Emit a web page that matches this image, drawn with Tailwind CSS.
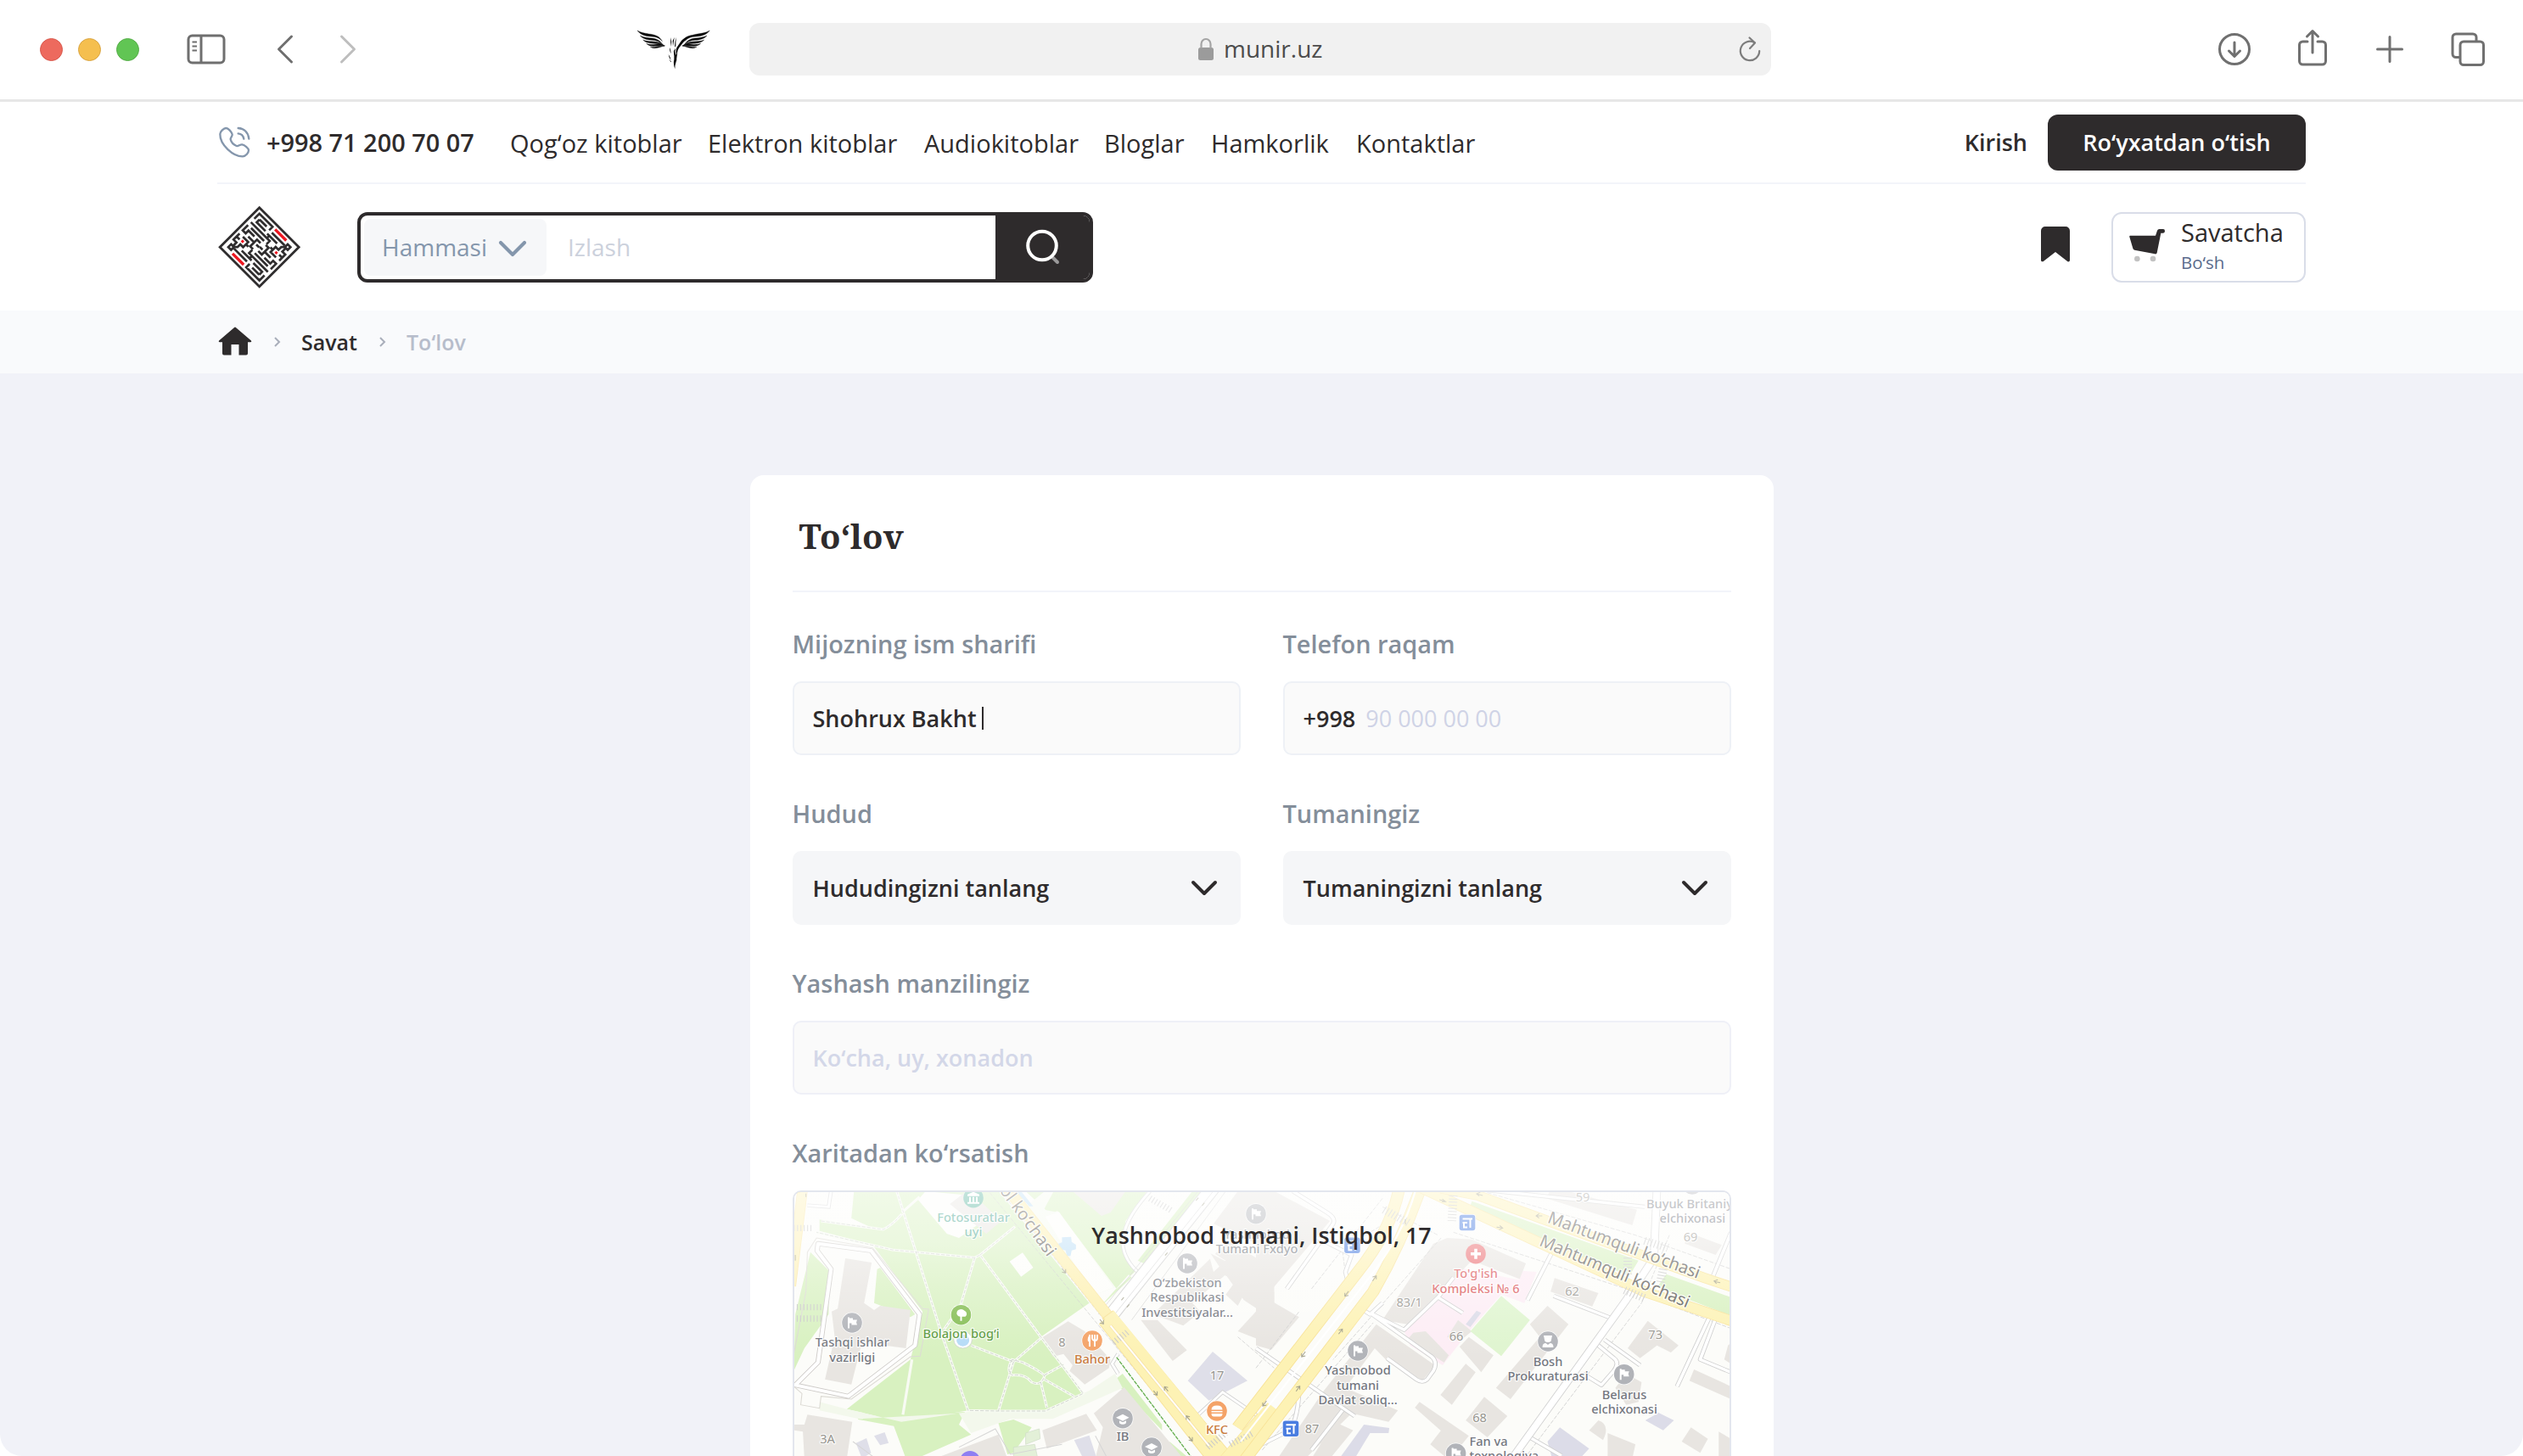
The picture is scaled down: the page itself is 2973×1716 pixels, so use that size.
<!DOCTYPE html>
<html lang="uz">
<head>
<meta charset="utf-8">
<title>To‘lov</title>
<script src="https://cdn.jsdelivr.net/npm/@tailwindcss/browser@4"></script>
</head>
<body class="bg-white font-['Open_Sans',sans-serif] text-[#2e2b2c]">
<div class="flex h-[1716px] w-[2973px] flex-col overflow-hidden rounded-b-[26px] bg-white">

  <!-- Browser toolbar -->
  <header class="flex h-[120px] shrink-0 items-start border-b-[3px] border-[#e7e7e7] pt-[27px]">
    <div class="flex h-[62px] items-center">
      <div class="ml-[47px] flex gap-[18px]">
        <i class="size-[27px] rounded-full border border-[#d8584c] bg-[#ed6a5e]"></i>
        <i class="size-[27px] rounded-full border border-[#d9a441] bg-[#f5bf4f]"></i>
        <i class="size-[27px] rounded-full border border-[#55ad47] bg-[#61c554]"></i>
      </div>
      <svg class="ml-[56px] h-[36px] w-[46px]" viewBox="0 0 46 36" fill="none" stroke="#6f6f6f" stroke-width="3"><rect x="2" y="2" width="42" height="32" rx="4.5"/><path d="M17 2v32"/><path d="M6.500 9.500h5.500M6.500 14.500h5.500M6.500 19.500h5.500" stroke-width="2"/></svg>
      <svg class="ml-[59px] h-[36px] w-[22px]" viewBox="0 0 22 36" fill="none" stroke="#6f6f6f" stroke-width="3" stroke-linecap="round" stroke-linejoin="round"><path d="M18.500 3L3.500 18l15 15"/></svg>
      <svg class="ml-[52px] h-[36px] w-[22px]" viewBox="0 0 22 36" fill="none" stroke="#bebebe" stroke-width="3" stroke-linecap="round" stroke-linejoin="round"><path d="M3.500 3l15 15-15 15"/></svg>
      <svg class="ml-[324px] h-[60px] w-[100px]" viewBox="0 0 300 180" fill="#0a0a0a">
        <g id="wing" stroke="#0a0a0a" stroke-width="1">
          <path d="M18 24C30 40 48 44 66 45 86 46 98 52 106 62 98 46 84 40 66 37 48 34 32 32 18 24Z"/>
          <path d="M28 42C38 54 52 57 70 58 86 59 98 64 108 74 98 60 88 53 70 51 54 50 40 48 28 42Z"/>
          <path d="M38 57C48 67 60 69 76 70 92 70 104 73 114 80 104 69 92 64 76 63 60 62 48 62 38 57Z"/>
          <path d="M50 70C58 78 70 80 82 79 94 77 106 76 116 78 106 71 94 71 82 73 70 74 60 74 50 70Z"/>
          <path d="M64 82C74 88 84 87 94 84L112 79C100 78 92 79 84 81 76 83 70 83 64 82Z"/>
        </g>
        <use href="#wing" transform="matrix(-1 0 0 1 292 0)"/>
        <path d="M212 40C190 44 178 54 168 68L157 85C153 96 154 104 158 114 157 100 162 88 171 78 182 62 196 50 212 40Z"/>
        <path d="M136 48q5 16 2 34-4-16-2-34zM149 48l-5 32-1-20zM156 47q-3 18-2 31l-4 5q0-22 6-36zM134 84q-4 10 3 22-1-12-3-22zM153 86q-4 12 1 22 6 14 1 26-5 14-4 26-7-18-3-34 1-12-1-22-2-10 6-18zM128 108q1 12 9 20-3-12-9-20zM130 124l8 10-2 2zM160 94q-1 16-3 28l-3-8z"/>
      </svg>
      <div class="ml-[38px] flex h-[62px] w-[1204px] items-center rounded-[12px] bg-[#f1f1f1]">
        <svg class="ml-[528px] h-[28px] w-[20px]" viewBox="0 0 20 28"><rect x="1" y="12" width="18" height="15" rx="2.500" fill="#9b9b9b"/><path d="M4.500 13V8a5.500 6 0 0 1 11 0v5" fill="none" stroke="#a4a4a4" stroke-width="2.200"/></svg>
        <span class="mb-[3px] ml-[11px] text-[28px] leading-none text-[#4c4c4c]">munir.uz</span>
        <svg class="mr-[10px] ml-auto h-[32px] w-[30px]" viewBox="0 0 30 32" fill="none" stroke="#7d7d7d" stroke-width="2.200" stroke-linecap="round" stroke-linejoin="round"><path d="M20.500 8.200A11.200 11.200 0 1 0 26.200 18"/><path d="M14.500 2.500l6.500 6-6 6.500"/></svg>
      </div>
      <svg class="ml-[526px] size-[40px]" viewBox="0 0 40 40" fill="none" stroke="#707070" stroke-width="3" stroke-linecap="round" stroke-linejoin="round"><circle cx="20" cy="20" r="17.500"/><path d="M20 12v16M13.500 22l6.500 6.500 6.500-6.500"/></svg>
      <svg class="mb-[3px] ml-[52px] h-[46px] w-[40px]" viewBox="0 0 40 46" fill="none" stroke="#707070" stroke-width="3" stroke-linecap="round" stroke-linejoin="round"><path d="M14 15H8.500a4 4 0 0 0-4 4v19a4 4 0 0 0 4 4h23a4 4 0 0 0 4-4V19a4 4 0 0 0-4-4H26M20 28V3M13.500 9L20 2.500 26.500 9"/></svg>
      <svg class="ml-[51px] size-[40px]" viewBox="0 0 40 40" fill="none" stroke="#707070" stroke-width="3" stroke-linecap="round"><path d="M20 5.500v29M5.500 20h29"/></svg>
      <svg class="ml-[51px] size-[42px]" viewBox="0 0 42 42" fill="none" stroke="#707070" stroke-width="3" stroke-linejoin="round"><rect x="12" y="12" width="27.500" height="27.500" rx="4"/><path d="M11 30.500H7a4 4 0 0 1-4-4V7a4 4 0 0 1 4-4h20a4 4 0 0 1 4 4v4"/></svg>
    </div>
  </header>

  <!-- Site header -->
  <div class="mx-[256px] flex h-[97px] w-[2461px] shrink-0 items-center border-b-2 border-[#f3f4fa]">
    <svg class="size-[40px]" viewBox="17 24 120 120" fill="none" stroke="#8496ac" stroke-width="7" stroke-linecap="round" stroke-linejoin="round"><path d="M48 33C40 33 27 45 27 54C26 92 74 134 107 133C118 132 128 120 128 111C128 104 114 93 105 91C97 90 92 98 85 96C75 92 66 82 64 73C63 66 71 62 70 55C68 47 56 33 48 33Z"/><path d="M91 33C113 34 127 49 129 71M91 52C102 53 109 60 111 71"/></svg>
    <span class="mt-[2px] ml-[18px] w-[287px] text-[28.900px] leading-none font-semibold">+998 71 200 70 07</span>
    <nav class="mt-[2px] grid grid-cols-[233px_255px_212px_126px_171px_auto] text-[29px] leading-none whitespace-nowrap">
      <a>Qog‘oz kitoblar</a><a>Elektron kitoblar</a><a>Audiokitoblar</a><a>Bloglar</a><a>Hamkorlik</a><a>Kontaktlar</a>
    </nav>
    <a class="ml-auto text-[27px] leading-none font-semibold">Kirish</a>
    <a class="ml-[24px] flex h-[66px] w-[304px] items-center justify-center rounded-[12px] bg-[#2e2b2c] text-[27px] leading-none font-semibold text-white">Ro‘yxatdan o‘tish</a>
  </div>

  <div class="mx-[256px] flex h-[149px] w-[2461px] shrink-0 items-center">
    <svg class="-mt-px size-[100px]" viewBox="48 64 300 300">
      <path d="M197 75L336.500 214.500 197 354 57.500 214.500Z" fill="none" stroke="#2f2d2e" stroke-width="8.500"/>
      <g transform="matrix(5 5 -5 5 197 74.500)">
        <path id="maze" fill="none" stroke="#2f2d2e" stroke-width="1.150" d="M2.200 5.800V2.200H11.500V4.600M4.300 4.200H9.300M4.300 4.200V6.200H10.500M2.200 8.200H15.500V10.500M2.200 10.200V14H4.300V12H8.500M4.300 10.200H13.500M6.300 14.200H10.500V12.200H13M2.200 16.200V20.500H4.300V23M2.200 18.300H4.300M4.500 16.200H8.300V19.800H6.300V22M10.500 14.200V17H12.500M13.300 4.500H22.500M12 6.500H19M13.500 6.500V8.200M3 23H5V25H3ZM5 23L6.500 21.500M8.300 17.800H10M12 14.200H14"/>
        <use href="#maze" transform="rotate(180 14 14)"/>
        <path d="M13.300 2.200H21.200M6.800 25.800H14.700" stroke="#ee1620" stroke-width="1.400"/>
        <path d="M5.400 17.300h1.300v1.300h-1.300zM21.300 9.400h1.300v1.300h-1.300z" fill="#ee1620"/>
      </g>
    </svg>
    <div class="ml-[65px] flex h-[83px] w-[867px] items-stretch overflow-hidden rounded-[12px] border-4 border-[#2e2b2c]">
      <div class="my-[4px] ml-[4px] flex w-[215px] items-center rounded-[8px] bg-[#f6f7f9] pl-[21px] leading-none text-[#8496ac]">
        <span class="mb-px w-[135px] text-[28px] font-medium">Hammasi</span>
        <svg class="mt-[2px] h-[22px] w-[38px]" viewBox="0 0 38 22" fill="none" stroke="#8496ac" stroke-width="4.200" stroke-linecap="round" stroke-linejoin="round"><path d="M5 4l14 14L33 4"/></svg>
      </div>
      <div class="flex flex-1 items-center pb-px pl-[25px] text-[28px] leading-none text-[#ccd1dc]">Izlash</div>
      <div class="flex w-[111px] items-center bg-[#2e2b2c] pl-[32px]">
        <svg class="size-[48px]" viewBox="0 0 48 48" fill="none" stroke-linecap="round"><path d="M36 36l5 5" stroke="#9a999a" stroke-width="4"/><circle cx="23" cy="21.500" r="16.800" stroke="#fff" stroke-width="4"/></svg>
      </div>
    </div>
    <svg class="mb-[7px] ml-auto h-[42px] w-[34px]" viewBox="0 0 34 42" fill="#2e2b2c"><path d="M5 0h24a5 5 0 0 1 5 5v34.500c0 2-2 2.600-3.500 1L17 30 3.500 40.500C2 42 0 41.500 0 39.500V5a5 5 0 0 1 5-5z"/></svg>
    <div class="ml-[49px] flex h-[83px] w-[229px] rounded-[12px] border-2 border-[#d9dde8]">
      <svg class="mt-[18px] ml-[17px] h-[44px] w-[46px]" viewBox="0 0 138 132"><path d="M9 23h90l6-18q2-5 7-5h14q6 0 6 7t-6 7h-8l-14 70q-1 5-7 4L25 74q-5-1-6-6L7 28q-1-5 2-5z" fill="#2e2b2c"/><circle cx="34" cy="105" r="10" fill="#c2c2c2"/><circle cx="90" cy="105" r="10" fill="#c2c2c2"/></svg>
      <div class="ml-[17px] flex flex-col">
        <span class="mt-[6px] text-[29px] leading-[32px]">Savatcha</span>
        <span class="mt-[6px] text-[20.500px] leading-[26px] text-[#5a6b8c]">Bo‘sh</span>
      </div>
    </div>
  </div>

  <!-- Breadcrumbs -->
  <div class="flex h-[74px] shrink-0 items-center bg-[#f9fafc] pl-[257px] text-[25px] leading-none">
    <svg class="mb-[3px] h-[34px] w-[40px]" viewBox="0 0 40 34" fill="#2e2b2c"><path d="M18.800 1.200q1.200-1.200 2.400 0L39 16.500q1 1.500-.8 1.700H35V31.500q0 2-2 2h-8.500V21h-9v12.500H7q-2 0-2-2V18.200H1.800Q0 18 1 16.500z"/></svg>
    <svg class="ml-[24px] h-[14px] w-[12px]" viewBox="0 0 12 14" fill="none" stroke="#a9aeba" stroke-width="2"><path d="M3 2l5 5-5 5"/></svg>
    <span class="ml-[22px] w-[66px] font-semibold">Savat</span>
    <svg class="ml-[24px] h-[14px] w-[12px]" viewBox="0 0 12 14" fill="none" stroke="#a9aeba" stroke-width="2"><path d="M3 2l5 5-5 5"/></svg>
    <span class="ml-[22px] font-semibold text-[#b7bdcb]">To‘lov</span>
  </div>

  <!-- Checkout -->
  <main class="flex flex-1 justify-center bg-[#f1f2f8] pt-[120px]">
    <section class="h-[1300px] w-[1206px] shrink-0 rounded-t-[16px] bg-white px-[50px]">
      <h1 class="flex h-[138px] items-center border-b-2 border-[#f2f4fa] pt-[7px] pl-[8px] font-['Noto_Serif',serif] text-[40px] leading-none font-bold">To‘lov</h1>
      <div class="mt-[41px] grid grid-cols-2 gap-x-[50px] gap-y-[49px] text-[27px] leading-none font-semibold">
        <div>
          <div class="mb-[24px] flex h-[40px] items-center text-[28.900px] text-[#848e9a]">Mijozning ism sharifi</div>
          <div class="flex h-[87px] items-center rounded-[10px] border-2 border-[#eef1f6] bg-[#fafafa] pl-[22px]">Shohrux Bakht<span class="ml-[6px] h-[27px] w-[2px] bg-[#2e2b2c]"></span></div>
        </div>
        <div>
          <div class="mb-[24px] flex h-[40px] items-center text-[28.900px] text-[#848e9a]">Telefon raqam</div>
          <div class="flex h-[87px] items-center rounded-[10px] border-2 border-[#eef1f6] bg-[#fafafa] pl-[22px]">+998<span class="ml-[12px] font-normal text-[#cfd3e6]">90 000 00 00</span></div>
        </div>
        <div>
          <div class="mb-[24px] flex h-[40px] items-center text-[28.900px] text-[#848e9a]">Hudud</div>
          <div class="flex h-[87px] items-center justify-between rounded-[10px] bg-[#f5f6f8] pr-[26px] pl-[24px]">Hududingizni tanlang<svg class="h-[22px] w-[34px]" viewBox="0 0 34 22" fill="none" stroke="#2e2b2c" stroke-width="4" stroke-linecap="round" stroke-linejoin="round"><path d="M4 4l13 13L30 4"/></svg></div>
        </div>
        <div>
          <div class="mb-[24px] flex h-[40px] items-center text-[28.900px] text-[#848e9a]">Tumaningiz</div>
          <div class="flex h-[87px] items-center justify-between rounded-[10px] bg-[#f5f6f8] pr-[26px] pl-[24px]">Tumaningizni tanlang<svg class="h-[22px] w-[34px]" viewBox="0 0 34 22" fill="none" stroke="#2e2b2c" stroke-width="4" stroke-linecap="round" stroke-linejoin="round"><path d="M4 4l13 13L30 4"/></svg></div>
        </div>
        <div class="col-span-2">
          <div class="mb-[24px] flex h-[40px] items-center text-[28.900px] text-[#848e9a]">Yashash manzilingiz</div>
          <div class="flex h-[87px] items-center rounded-[10px] border-2 border-[#eff0f7] bg-[#fafafa] pl-[22px] text-[#d3d7e8]">Ko‘cha, uy, xonadon</div>
        </div>
        <div class="col-span-2">
          <div class="mb-[24px] flex h-[40px] items-center text-[28.900px] text-[#848e9a]">Xaritadan ko‘rsatish</div>
          <div class="relative h-[420px] overflow-hidden rounded-[10px] border-2 border-[#e3e6ee]">
            <svg class="block h-[416px] w-[1102px]" viewBox="936 1406 1102 416">
              <defs>
                <linearGradient id="fade" x1="0" y1="0" x2="0" y2="1"><stop offset="0" stop-color="#fff" stop-opacity=".64"/><stop offset=".3" stop-color="#fff" stop-opacity=".5"/><stop offset=".55" stop-color="#fff" stop-opacity=".28"/><stop offset=".85" stop-color="#fff" stop-opacity=".06"/><stop offset="1" stop-color="#fff" stop-opacity="0"/></linearGradient>
                <g id="flag"><circle r="12.500" fill="#fff"/><circle r="11.800" fill="#b1b3b8"/><path d="M-5-6.500h2v1h4v2h5l-1 3 1 3H-.500v-2H-3v6h-2z" fill="#fff"/></g>
                <g id="cap"><circle r="12.500" fill="#fff"/><circle r="11.800" fill="#b1b3b8"/><path d="M-8-1L0-5 7.500-1 0 3zM-4 2.500l4 2 4-2v3q-4 3-8 0z" fill="#fff"/></g>
                <g id="metro"><rect x="-10" y="-10" width="20" height="20" rx="3.500" fill="#fff"/><rect x="-9.300" y="-9.300" width="18.600" height="18.600" rx="3" fill="#4a7de0"/><path d="M-5.500-4.500H6M-5.500 0H0M3.500-4.500V6M-4 0v5.500h4" fill="none" stroke="#fff" stroke-width="2"/></g>
              </defs>
              <rect x="930" y="1400" width="1120" height="430" fill="#fcfcf9"/>

              <!-- western half -->
              <g transform="translate(930 1390) scale(.35714 .33333)">
                <g fill="#d8f1c0">
                  <path d="M215 30L680 30 990 440 830 560 970 760 840 820 590 820 370 860 190 815 400 640 440 470 275 235 100 185V145L280 178 205 140z"/>
                  <path d="M290 320L300 315 415 480 400 490 280 440zM225 845L580 825 560 870 600 905 420 990 385 990 345 875 228 852zM690 865L740 852 800 880 740 970 720 975zM70 260L130 325V480L50 600 15 680 20 480zM1100 690L1230 870V890L1070 715zM1255 930L1320 990H1260zM1150 290L1190 310 1320 130 1400 45H1330zM1020 460L1130 350 1120 340zM900 30L1190 30 1110 150 1100 250 1140 330 1080 390 885 115 860 125 780 45z"/>
                </g>
                <path d="M880 30L840 110 890 120 1075 385 1010 410 780 100 860 30z" fill="#f6faf0"/>
                <g fill="#fdfdfa"><path d="M425 75L450 45 600 60 640 150 560 210 520 195zM770 262L805 315 765 347 727 293zM845 135L890 118 1070 385 1005 412z"/></g>
                <path d="M100 790L190 815 370 860 590 825 840 820 990 750 1075 690 1100 740 870 850 730 850 600 900 560 830 230 850 100 820z" fill="#f3f8ec"/>
                <g fill="#e8e5e1">
                  <path d="M185 282L272 297 247 440 280 465 300 450 400 465 385 600 240 580 205 728 118 710 150 560 140 470 160 460z"/>
                  <path d="M60 835L208 860 190 990H50L45 895 15 890V870H50zM835 562L920 505 975 540 1060 640 1055 670 975 728 925 680 935 660 905 620 870 630zM1005 830L1105 738 1300 990H1010L1035 880zM835 890L980 832 1015 890 850 955zM480 990L690 905 720 990zM530 90L590 40 700 150 650 195zM935 45H1110L1060 120 1030 132z"/>
                  <path d="M1160 500L1215 500 1312 607 1265 645zM1200 480L1450 220 1600 320V590L1440 400 1300 520zM1480 45H1600V260L1400 160z"/>
                </g>
                <path d="M1330 440L1440 340 1500 430 1600 500V570L1460 440 1400 520zM1380 250L1440 290 1400 330z" fill="#fcfcf9"/>
                <path d="M1485 345L1520 370 1480 450 1440 410zM1390 265L1490 320 1440 345zM1480 540L1600 400V590z" fill="#e8e5e1"/>
                <path d="M1397 612L1512 715 1385 785 1315 715zM220 935L255 918 270 970 240 990zM280 910L315 897 328 935 300 943zM940 925L990 908 1015 990H970z" fill="#dfdfe9"/>
                <path d="M900 208l30-2 2 18 14 10v16l-14 4-4 20h-12l-4-20-20-6-4-18 12-4zM765 45L805 98H792L745 45z" fill="#bfe0f7"/>
                <circle cx="573" cy="570" r="30" fill="#fff" stroke="#ccc" stroke-width="2"/><circle cx="573" cy="572" r="21" fill="#b5dbf7"/>
                <g fill="none" stroke="#f8fbf3" stroke-width="9"><path id="paths" d="M355 45L500 540 590 820 690 822 845 822 970 760 830 560 630 270 612 280 340 252 90 190M630 270L745 170M612 280L565 450 510 535M600 590L740 648 830 565M740 648L690 822M830 720L850 810M735 640Q715 680 735 695 780 690 800 720 830 735 842 700 845 690 770 650ZM842 695L905 658M842 710L940 770M105 150L310 180Q340 165 372 125"/><path d="M405 640L375 835M372 120L430 65"/></g>
                <path d="M355 45L500 540 590 820 690 822 845 822 970 760 830 560 630 270 612 280 340 252 90 190M630 270L745 170M612 280L565 450 510 535M600 590L740 648 830 565M740 648L690 822M830 720L850 810M735 640Q715 680 735 695 780 690 800 720 830 735 842 700 845 690 770 650ZM842 695L905 658M842 710L940 770M105 150L310 180Q340 165 372 125" fill="none" stroke="#c9cdc6" stroke-width="2.400" stroke-dasharray="12 5"/>
                <path d="M90 210L275 245 440 460 460 462 432 628 400 630 205 780 105 770 100 812 38 800 42 760 15 735M90 210L60 260 55 400 15 620" fill="none" stroke="#dcdad4" stroke-width="3"/>
                <path d="M95 230L270 255 430 480 415 590 195 770 20 730 95 650 138 320 92 255Z" fill="none" stroke="#cdcac7" stroke-width="17" stroke-linejoin="round"/>
                <path d="M95 230L270 255 430 480 415 590 195 770 20 730 95 650 138 320 92 255Z" fill="none" stroke="#fff" stroke-width="12" stroke-linejoin="round"/>
                <g fill="none" stroke="#d4d4d4" stroke-width="13"><path d="M140 30L130 100 60 95M1190 45Q1100 150 1100 230 1105 290 1155 335M1085 620L1065 655 1085 690M1335 850L1430 755 1560 850"/></g>
                <g fill="none" stroke="#fff" stroke-width="8"><path d="M140 30L130 100 60 95M1190 45Q1100 150 1100 230 1105 290 1155 335M1085 620L1065 655 1085 690M1335 850L1430 755 1560 850"/></g>
                <path d="M1400 30L1050 500" stroke="#d0d0d0" stroke-width="50"/><path d="M1400 30L1050 500" stroke="#fff" stroke-width="44"/>
                <path d="M1410 30L1055 505M1360 30L1020 480M1440 45L1130 500" stroke="#cdcdcd" stroke-width="2"/>
                <path d="M45 30L5 380" stroke="#fbe5a0" stroke-width="35"/><path d="M45 30L5 380" stroke="#fdf1b6" stroke-width="30"/>
                <path d="M650 35L1450 1080M690 35L1130 620M1480 560L1600 670" stroke="#c8c8c8" fill="none" stroke-width="2" stroke-dasharray="14 5"/>
                <path d="M715 30L1055 490" stroke="#fae6a0" stroke-width="38"/><path d="M715 30L1055 490" stroke="#fdf0b0" stroke-width="33"/>
                <path d="M1040 500L1400 990M1050 480L1440 985" stroke="#f8e297" stroke-width="46"/><path d="M1040 500L1400 990M1055 480L1440 985" stroke="#fdf2b4" stroke-width="41"/>
                <path d="M1060 520L1385 945" stroke="#f6dfa0" stroke-width="10"/><path d="M1060 520L1385 945" stroke="#fff" stroke-width="6"/>
                <path d="M1568 850L1440 1010" stroke="#f8e297" stroke-width="62"/><path d="M1600 810L1430 1020" stroke="#fdf2b4" stroke-width="57"/>
                <path d="M1080 632L1330 990" stroke="#fff" stroke-width="9"/><path d="M1080 632L1330 990" stroke="#6ab053" stroke-width="4" stroke-dasharray="14 3"/>
                <path d="M15 175H75M25 455H110M25 495H110M1190 70L1265 115M1070 580L1120 540M1380 950L1440 900M1455 940L1530 900" stroke="#c9c9c9" stroke-width="22" stroke-dasharray="3 8"/>
                <g stroke="#a5a38c" stroke-width="3" fill="none"><path d="M900 318l12 16m-12-3l12 3v-14M1025 498l12 16m-12-3l12 3v-14M1202 750l12 16m-12-3l12 3v-14M1318 912l12 16m-12-3l12 3v-14M1250 752l-12-16m12 3l-12-3v14M1322 855l-12-16m12 3l-12-3v14M1350 68l-8 10M1362 96l8-10M1240 272l8-10M1114 455l8-10M1104 420l-8 10M20 290v-20M55 65v-12"/></g>
                <path d="M780 900L825 885 828 920 780 940zM740 950L810 940 820 990H740z" fill="#e3f0d8" stroke="#cfdcc8" stroke-width="2"/>
                <path d="M210 930L310 1010 350 985M560 950L680 885 730 975 900 940M1010 910L1050 990" fill="none" stroke="#d6d6d6" stroke-width="3"/>
              </g>

              <!-- eastern half -->
              <g transform="translate(1480 1390) scale(.3635 .33333)">
                <path d="M0 45H60L240 150 30 420 140 490 50 605 0 590zM390 515L580 660 540 715 430 650 385 600 290 740 460 820 430 860 310 830 160 990H70L220 750zM690 560L770 625 730 685 660 595zM680 655L712 685 635 800 598 765zM945 450L1013 515 825 780 778 740 920 560 888 515zM968 352L1110 405 1090 452 955 400zM740 772L815 840 750 915 680 855zM530 790L690 910 660 950 515 810zM1270 503L1370 590 1345 615 1300 590 1245 635 1205 600zM1400 190L1510 235 1490 270 1390 230zM960 30L1235 110 1220 165 940 70zM1420 675L1540 735V780L1405 715zM1200 690L1250 720 1240 790 1200 800 1165 740zM1140 900L1230 940 1220 990H1140zM1410 880L1465 920 1440 970 1380 930zM1110 855Q1150 870 1125 925L1080 890zM1500 895L1540 920V990H1500zM600 890L650 930 620 990 565 940zM255 860L315 890 240 990H180zM1530 590L1540 580V655L1518 640z" fill="#e8e5e1"/>
                <path d="M590 260L680 320 860 360 780 320 910 330 870 440 795 410 690 540 605 660 500 590 480 540 600 420 640 350 570 290z" fill="#fdeaf4" opacity=".85"/>
                <path d="M575 230L620 210 700 215 875 300 855 355 700 290 600 400 490 515 410 500zM510 545L550 540 625 625 610 650 490 570zM655 500L700 540 660 575 620 560z" fill="#e8e5e1"/>
                <path d="M795 415L888 500 795 628 695 540z" fill="#dff5cf"/>
                <path d="M700 80L1240 290 1210 345 690 110zM1330 338L1540 420V485L1300 385z" fill="#d8f1c0"/>
                <path d="M715 467L730 475 695 525 680 515zM985 880L1080 955 1050 990H960L945 930zM1305 828L1355 855 1320 890 1262 855zM350 870L432 882 430 900 370 900 320 990H270z" fill="#dcdce8"/>
                <path d="M410 70L180 390M600 210L250 640M410 100L590 200M20 960L380 510M640 190L1200 390 1540 530M750 50L1230 200 1540 320M1340 200L1250 440 870 990M400 170L280 250 290 340M0 670L140 470" fill="none" stroke="#cfcfcf" stroke-width="2.500" stroke-dasharray="14 5"/>
                <path d="M120 45L230 120Q260 140 250 160L100 390M200 210L310 270 290 330 300 375M340 460L370 480 410 440M370 475L570 630Q590 650 575 680L555 710Q540 725 520 710L425 635M370 475L480 535 590 420 670 475M590 420L640 350M880 430L960 260M965 415L1155 495M0 600L320 840M140 750Q135 850 110 890L0 950M1130 570L1245 660M1110 590L1160 635Q1180 650 1160 680L1120 730 1060 690M1470 490L1365 735M1490 495L1440 640 1540 685M880 910L990 980M1540 190L1480 350M740 40L1260 100M180 960L280 820" fill="none" stroke="#d0d0d0" stroke-width="15" stroke-linejoin="round"/>
                <path d="M120 45L230 120Q260 140 250 160L100 390M200 210L310 270 290 330 300 375M340 460L370 480 410 440M370 475L570 630Q590 650 575 680L555 710Q540 725 520 710L425 635M370 475L480 535 590 420 670 475M590 420L640 350M880 430L960 260M965 415L1155 495M0 600L320 840M140 750Q135 850 110 890L0 950M1130 570L1245 660M1110 590L1160 635Q1180 650 1160 680L1120 730 1060 690M1470 490L1365 735M1490 495L1440 640 1540 685M880 910L990 980M1540 190L1480 350M740 40L1260 100M180 960L280 820" fill="none" stroke="#fff" stroke-width="10" stroke-linejoin="round"/>
                <path d="M1300 30L1290 280 1200 430 830 990" fill="none" stroke="#d2d2d2" stroke-width="27"/><path d="M1300 30L1290 280 1200 430 830 990" fill="none" stroke="#fff" stroke-width="22"/>
                <path d="M465 30Q440 180 330 330L-60 880M535 30Q470 230 380 400L-40 1000" fill="none" stroke="#f8e297" stroke-width="40"/><path d="M465 30Q440 180 330 330L-60 880M535 30Q470 230 380 400L-40 1000" fill="none" stroke="#fdf2b4" stroke-width="35"/>
                <path d="M520 30Q480 200 360 360L-50 930" fill="none" stroke="#fff" stroke-width="6"/>
                <path d="M540 35L1260 400 1560 510" fill="none" stroke="#f8e297" stroke-width="38"/><path d="M540 35L1260 400 1560 510" fill="none" stroke="#fdf2b4" stroke-width="33"/>
                <path d="M600 35L720 60 1450 350 1560 390" fill="none" stroke="#f8e297" stroke-width="36"/><path d="M600 35L720 60 1450 350 1560 390" fill="none" stroke="#fdf2b4" stroke-width="31"/>
                <path d="M1260 220L1335 245M1195 395L1265 425M415 110L500 160M640 60L635 150M1205 280V340M1320 320L1310 370" stroke="#c9c9c9" stroke-width="28" stroke-dasharray="3 8"/>
                <g stroke="#a5a38c" stroke-width="3" fill="none"><path d="M595 75l20 7m-11-10l11 10h-12M780 172l20 3m-10-9l10 9-12 6M735 60l-20-6m12-6l-12 6 9 8M928 132l-20 0m10-8l-10 8 10 8M1505 368l-20-4m12-6l-12 4 8 10M378 362l12-18m-12 4l12-4v12M268 550l12-18m-12 4l12-4v12M130 752l12-18m-12 4l12-4v12M300 398l-12 18m0-12v12l12-3M160 612l-12 18m0-12v12l12-3M34 786l-12 18m0-12v12l12-3M484 162v-18"/></g>
              </g>

              <!-- markers -->
              <g transform="translate(1147 1412.700)"><circle r="11.800" fill="#55b39c"/><path d="M-7-4L0-7 7-4V-2H-7zM-5-1h2v6h-2zM-1-1h2v6h-2zM3-1h2v6H3zM-7 5H7v2H-7z" fill="#fff"/></g>
              <g transform="translate(1132.500 1550.700)"><circle r="12.500" fill="#fff"/><circle r="11.800" fill="#84bd52"/><path d="M-1 7V2a5 4 0 0 1-4-5 5 4 0 0 1 9-2 4 4 0 0 1 1 7H1v5z" fill="#fff"/></g>
              <g transform="translate(1287 1581)"><circle r="12.500" fill="#fff"/><circle r="11.800" fill="#f4a368"/><path d="M-3-7V7M3 0V7M0-7v4a3 3 0 0 0 6 0v-4M3-7v8" stroke="#fff" stroke-width="1.900" fill="none"/><path d="M-3-7q-3 3-2 8h3z" fill="#fff"/></g>
              <g transform="translate(1434 1664)"><circle r="12.500" fill="#fff"/><circle r="11.800" fill="#f4a368"/><path d="M-6.500-1.500q0-5 6.500-5t6.500 5zM-6.500 0h13v1.600h-13zM-6.500 3h13q0 3.500-3 3.500h-7q-3 0-3-3.500z" fill="#fff"/></g>
              <g transform="translate(1739 1478.700)"><circle r="11.800" fill="#ec7276"/><path d="M0-6V6M-6 0H6" stroke="#fff" stroke-width="3.600"/></g>
              <g transform="translate(1824 1582)"><circle r="12.500" fill="#fff"/><circle r="11.800" fill="#b1b3b8"/><path d="M-5-7H5L4-2q0 3-4 3t-4-3zM-6.500 7q0-5 4-5L0 4l2.500-2q4 0 4 5z" fill="#fff"/></g>
              <circle cx="1143" cy="1723" r="12" fill="#8f7ff2"/>
              <use href="#flag" x="1004" y="1560"/><use href="#flag" x="1399" y="1490"/><use href="#flag" x="1480" y="1431.700"/><use href="#flag" x="1913.700" y="1620.700"/><use href="#flag" x="1600" y="1593"/><use href="#flag" x="1715.600" y="1714"/><use href="#flag" x="1994" y="1397"/>
              <use href="#cap" x="1323" y="1672.700"/><use href="#cap" x="1357" y="1707"/>
              <use href="#metro" x="1593.400" y="1468.700"/><use href="#metro" x="1729" y="1442"/><use href="#metro" x="1521" y="1684.700"/>

              <!-- labels -->
              <g font-family="'Noto Sans','Open Sans',sans-serif" font-size="14.600" font-weight="500" text-anchor="middle" fill="#74777f" stroke="#fff" stroke-width="2.500" stroke-linejoin="round" paint-order="stroke" stroke-opacity=".8">
                <g fill="#45a48d"><text x="1147" y="1440.700">Fotosuratlar</text><text x="1147" y="1458">uyi</text></g>
                <text x="1132.500" y="1578.300" fill="#5b9a3e">Bolajon bog‘i</text>
                <text x="1004.300" y="1588.300">Tashqi ishlar</text><text x="1004.300" y="1606">vazirligi</text>
                <text x="1287" y="1608" fill="#c97c40">Bahor</text><text x="1434" y="1691" fill="#c97c40">KFC</text>
                <text x="1323" y="1699">IB</text>
                <text x="1399" y="1518">O‘zbekiston</text><text x="1399" y="1535.300">Respublikasi</text><text x="1399" y="1552.600">Investitsiyalar...</text>
                <text x="1481" y="1460.500">Yashnobod</text><text x="1481" y="1477.700">Tumani Fxdyo</text>
                <g fill="#dc5a5e"><text x="1739" y="1507.300">To'g'ish</text><text x="1739" y="1524.700">Kompleksi № 6</text></g>
                <text x="1940" y="1424.700" text-anchor="start">Buyuk Britaniya</text><text x="1994.400" y="1442">elchixonasi</text>
                <text x="1824" y="1610.700">Bosh</text><text x="1824" y="1628">Prokuraturasi</text>
                <text x="1914" y="1649.700">Belarus</text><text x="1914" y="1667">elchixonasi</text>
                <text x="1600" y="1621.300">Yashnobod</text><text x="1600" y="1638.700">tumani</text><text x="1600" y="1656">Davlat soliq...</text>
                <text x="1731.500" y="1704.700" text-anchor="start">Fan va</text><text x="1731.500" y="1722" text-anchor="start">texnologiya</text>
                <g fill="#97958f" font-weight="400"><text x="1251.400" y="1588">8</text><text x="1434" y="1627">17</text><text x="975" y="1702">3A</text><text x="1660.700" y="1541">83/1</text><text x="1716" y="1581">66</text><text x="1852.600" y="1528">62</text><text x="1865" y="1417">59</text><text x="1992" y="1464">69</text><text x="1950.700" y="1579">73</text><text x="1743.500" y="1677">68</text><text x="1546" y="1689.700">87</text></g>
                <g font-size="20" font-weight="400" fill="#5c5a56" text-anchor="start">
                  <text transform="translate(1822.500 1441.500) rotate(20.500)" textLength="190">Mahtumquli ko‘chasi</text>
                  <text transform="translate(1812.700 1468.500) rotate(22.900)" textLength="190">Mahtumquli ko‘chasi</text>
                  <text transform="translate(1170 1394) rotate(54)" textLength="110">bol ko‘chasi</text>
                </g>
              </g>
              <rect x="936" y="1406" width="1102" height="200" fill="url(#fade)"/>
            </svg>
            <div class="absolute inset-x-0 top-[35px] flex h-[32px] items-center justify-center text-[26.800px]">Yashnobod tumani, Istiqbol, 17</div>
          </div>
        </div>
      </div>
    </section>
  </main>
</div>
</body>
</html>
